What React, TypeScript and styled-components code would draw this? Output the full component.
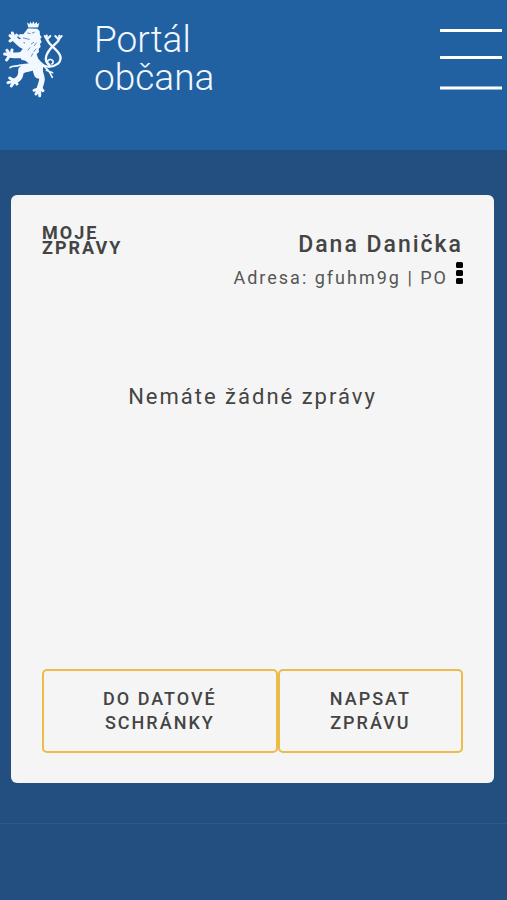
import React from "react";
import styled, { createGlobalStyle } from "styled-components";

const GlobalStyle = createGlobalStyle`
  *, *::before, *::after { box-sizing: border-box; }
  body {
    margin: 0;
    background: #234f80;
    color: #444444;
    font-family: Roboto, "Noto Sans", sans-serif;
  }
`;

const Page = styled.div`
  min-height: 100vh;
  display: flex;
  flex-direction: column;
`;

const Header = styled.header`
  display: flex;
  justify-content: space-between;
  align-items: flex-start;
  height: 150px;
  padding: 20px 5px 0 3px;
  background: #2161a2;
`;

const Brand = styled.a`
  display: flex;
  align-items: flex-start;
  gap: 29px;
  color: #f2f8ff;
  text-decoration: none;
`;

const BrandName = styled.span`
  width: min-content;
  padding-top: 1px;
  font-size: 37px;
  font-weight: 300;
  line-height: 38px;
`;

const MenuButton = styled.button`
  display: flex;
  margin-top: 9px;
  padding: 0;
  border: 0;
  background: none;
  color: #ffffff;
  cursor: pointer;
`;

const Main = styled.main`
  padding: 45px 13px 40px 11px;
`;

const Card = styled.section`
  display: flex;
  flex-direction: column;
  min-height: 588px;
  padding: 30px 31px;
  border-radius: 6px;
  background: #f5f5f5;
`;

const CardHeader = styled.div`
  display: flex;
  justify-content: space-between;
  align-items: flex-start;
`;

const CardTitle = styled.h1`
  width: min-content;
  margin: 0;
  font-size: 18px;
  font-weight: 700;
  line-height: 15px;
  letter-spacing: 2px;
  text-transform: uppercase;
`;

const Account = styled.div`
  display: flex;
  flex-direction: column;
  align-items: flex-end;
  padding-top: 4px;
`;

const AccountName = styled.h2`
  margin: 0;
  font-size: 23px;
  font-weight: 500;
  line-height: 32px;
  letter-spacing: 2px;
`;

const AddressRow = styled.div`
  display: flex;
  align-items: flex-start;
  gap: 8px;
`;

const Address = styled.span`
  padding-top: 3px;
  color: #555555;
  font-size: 18px;
  line-height: 28px;
  letter-spacing: 2px;
`;

const MoreButton = styled.button`
  display: flex;
  margin-top: 1px;
  padding: 0;
  border: 0;
  background: none;
  color: #000000;
  cursor: pointer;
`;

const EmptyMessage = styled.p`
  flex: 1;
  margin: 90px 0 0;
  font-size: 22px;
  line-height: 30px;
  letter-spacing: 2px;
  text-align: center;
`;

const Actions = styled.div`
  display: grid;
  grid-template-columns: 14fr 11fr;
`;

const ActionButton = styled.button`
  padding: 16px 44px;
  border: 2px solid #ebbb4b;
  border-radius: 5px;
  background: transparent;
  color: #444444;
  font-family: inherit;
  font-size: 18px;
  font-weight: 500;
  line-height: 24px;
  letter-spacing: 2px;
  text-transform: uppercase;
  cursor: pointer;
`;

const Footer = styled.footer`
  flex: 1;
  border-top: 1px solid #2c5788;
`;

const LionEmblem = () => (
  <svg width="62" height="79" viewBox="9 29 186 237" fill="currentColor" aria-hidden="true">
    <path d="M81 36l7 6 3-8 5 7 4-8 4 8 6-7 2 8 6-5-4 16H85z" />
    <path d="M84 54l28 1 7 7 1 12 5 6-4 6 4 9-5 6 2 9-6 5 1 10-7 7 4 12 10 12 6 12-2 14-10 8-14-3-10-14-8-14-10-8-12-3-5-12 2-12 9-10 6-10-2-8-8 1-10-4-5-7 7 1 6-3-8-3-2-6 8-4 8 1z" />
    <g fill="none" stroke="currentColor" strokeLinecap="round" strokeLinejoin="round">
      <path d="M86 112C68 111 56 98 42 84" strokeWidth="17" />
      <path d="M42 80L37 68M39 83L30 76M39 86L30 92M46 82L50 74" strokeWidth="9" />
      <path d="M80 128C62 139 44 135 29 134" strokeWidth="17" />
      <path d="M28 131L21 120M26 133L14 131M28 136L20 149M34 130L36 119" strokeWidth="9" />
      <path d="M104 170C88 174 74 165 63 178C61 190 66 197 53 207L42 213" strokeWidth="16" />
      <path d="M98 168C86 176 77 172 68 178" strokeWidth="23" />
      <path d="M41 210L29 203M38 213L24 217M41 216L34 227M46 211L51 221" strokeWidth="9" />
      <path d="M30 172C38 164 48 170 58 165L88 161" strokeWidth="5" />
      <path d="M110 170L116 190" strokeWidth="29" />
      <path d="M118 187C133 205 123 218 118 236" strokeWidth="17" />
      <path d="M115 236L102 240M116 239L108 251M119 240L119 256M121 232L129 241" strokeWidth="9" />
      <path d="M122 164C140 170 150 185 157 201M139 180L158 187" strokeWidth="5" />
      <path d="M122 158C139 174 159 171 174 160C194 140 171 121 157 108C145 97 137 88 140 76" strokeWidth="7" />
      <path d="M148 163C128 150 140 127 157 109C170 97 180 91 178 77" strokeWidth="7" />
      <path d="M141 88L134 77M142 86L151 77M176 88L166 77M178 85L185 77" strokeWidth="6" />
      <path d="M151 168C134 158 145 144 154 148C163 151 159 161 155 161" strokeWidth="5" />
    </g>
    <g fill="none" stroke="#2161a2" strokeWidth="2" strokeLinecap="round">
      <path d="M84 52h29M83 68l8 2M97 68l6-2M70 83l18 4M101 96l-7 5M109 98l-6 8M108 116l-7 8M90 112l-6 7M98 130l-4 8" />
    </g>
  </svg>
);

const MenuIcon = () => (
  <svg width="62" height="61" viewBox="0 0 62 61" fill="currentColor" aria-hidden="true">
    <rect width="62" height="3" />
    <rect y="27" width="62" height="3" />
    <rect y="57.5" width="62" height="3" />
  </svg>
);

const MoreIcon = () => (
  <svg width="7" height="22" viewBox="0 0 7 22" fill="currentColor" aria-hidden="true">
    <rect width="7" height="6" rx="1.5" />
    <rect y="8" width="7" height="6" rx="1.5" />
    <rect y="16" width="7" height="6" rx="1.5" />
  </svg>
);

export default function App() {
  return (
    <Page>
      <GlobalStyle />
      <Header>
        <Brand href="#">
          <LionEmblem />
          <BrandName>Portál občana</BrandName>
        </Brand>
        <MenuButton type="button" aria-label="Menu">
          <MenuIcon />
        </MenuButton>
      </Header>
      <Main>
        <Card>
          <CardHeader>
            <CardTitle>Moje zprávy</CardTitle>
            <Account>
              <AccountName>Dana Danička</AccountName>
              <AddressRow>
                <Address>Adresa: gfuhm9g | PO</Address>
                <MoreButton type="button" aria-label="Další možnosti">
                  <MoreIcon />
                </MoreButton>
              </AddressRow>
            </Account>
          </CardHeader>
          <EmptyMessage>Nemáte žádné zprávy</EmptyMessage>
          <Actions>
            <ActionButton type="button">Do datové schránky</ActionButton>
            <ActionButton type="button">Napsat zprávu</ActionButton>
          </Actions>
        </Card>
      </Main>
      <Footer />
    </Page>
  );
}
